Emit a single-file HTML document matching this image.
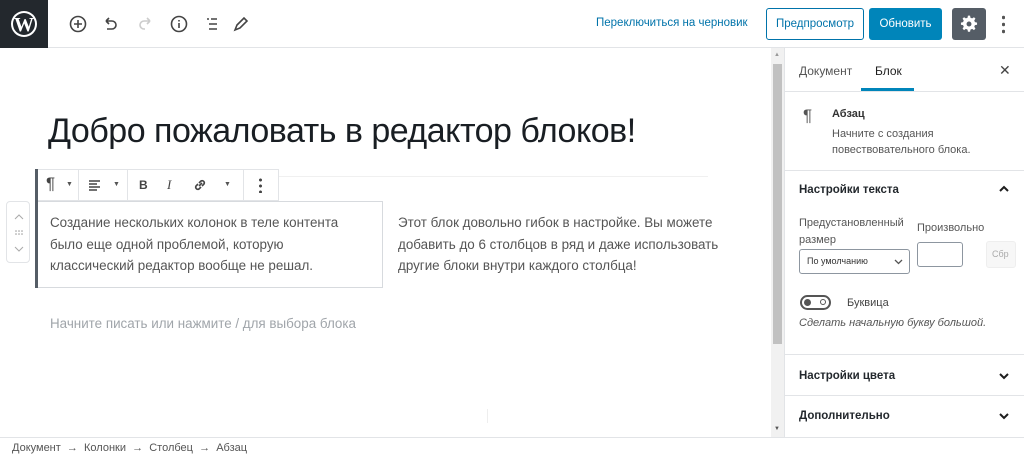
<!DOCTYPE html>
<html><head><meta charset="utf-8"><style>
*{box-sizing:border-box;margin:0;padding:0}
body{width:1024px;height:458px;overflow:hidden;background:#fff;font-family:"Liberation Sans","DejaVu Sans",sans-serif;color:#1e1e1e;position:relative}
.abs{position:absolute}
.top{left:0;top:0;width:1024px;height:48px;border-bottom:1px solid #e2e4e7}
.wp{left:0;top:0;width:48px;height:48px;background:#23282d}
.ic{stroke:#444;fill:none;stroke-width:1.6}
.side{left:784px;top:48px;width:240px;height:389px;border-left:1px solid #e2e4e7}
.sb{left:771px;top:48px;width:13px;height:389px;background:#f1f1f1}
.t13{font-size:12px}
.sec{border-top:1px solid #e2e4e7;width:240px;left:0}
.chev{stroke:#1e1e1e;stroke-width:2;fill:none}
</style></head><body>
<div class="abs top"></div>
<div class="abs wp"><svg width="48" height="48"><circle cx="24" cy="24" r="13" fill="#fff"/><circle cx="24" cy="24" r="11" fill="#23282d"/><text x="24" y="31" font-family="Liberation Serif" font-size="20" font-weight="bold" fill="#fff" text-anchor="middle">W</text></svg></div>
<svg class="abs" style="left:66px;top:12px" width="190" height="24">
<circle class="ic" cx="12" cy="12" r="7.5"/><path class="ic" d="M12 8v8M8 12h8"/>
<path class="ic" d="M40 9h6a4 4 0 0 1 0 8h-5M40 9l3-3M40 9l3 3"/>
<path stroke="#ccc" stroke-width="1.6" fill="none" d="M84 9h-6a4 4 0 0 0 0 8h1M84 9l-3-3M84 9l-3 3"/>
<circle class="ic" cx="113" cy="12" r="7.5"/><path class="ic" d="M113 11v5M113 8v1.5"/>
<path class="ic" d="M141 7h2M145 7h6M143 12h8M143 17h8"/>
<path class="ic" d="M169 18l2-5 7-7 3 3-7 7z"/>
</svg>
<div class="abs t13" style="left:596px;top:17px;color:#0073aa;font-size:11.5px">Переключиться на черновик</div>
<div class="abs t13" style="left:766px;top:8px;width:98px;height:32px;border:1px solid #0073aa;border-radius:3px;color:#0073aa;text-align:center;line-height:30px;font-size:11.5px">Предпросмотр</div>
<div class="abs t13" style="left:869px;top:8px;width:73px;height:32px;background:#0085ba;border-radius:3px;color:#fff;text-align:center;line-height:32px;font-size:11.5px">Обновить</div>
<div class="abs" style="left:952px;top:8px;width:34px;height:32px;background:#555d66;border-radius:3px"><svg width="34" height="32"><g transform="translate(17 16) scale(0.7) translate(-17 -16)"><path fill="#fff" d="M15.5 4h3l.6 3 2.4 1 2.6-1.7 2.1 2.1-1.7 2.6 1 2.4 3 .6v3l-3 .6-1 2.4 1.7 2.6-2.1 2.1-2.6-1.7-2.4 1-.6 3h-3l-.6-3-2.4-1-2.6 1.7-2.1-2.1 1.7-2.6-1-2.4-3-.6v-3l3-.6 1-2.4-1.7-2.6 2.1-2.1 2.6 1.7 2.4-1z"/><circle cx="17" cy="16" r="3.5" fill="#555d66"/></g></svg></div>
<div class="abs" style="left:1002px;top:14px;width:3px;height:20px;background:radial-gradient(circle,#555 1.5px,transparent 2px) 0 0/3px 7px"></div>

<div class="abs" style="left:48px;top:112px;font-size:34px;color:#191e23;letter-spacing:-0.5px">Добро пожаловать в редактор блоков!</div>
<div class="abs" style="left:36px;top:176px;width:672px;border-top:1px solid #f0f0f0"></div>
<div class="abs" style="left:35px;top:169px;width:244px;height:32px;border:1px solid #e2e4e7;background:#fff"></div>
<div class="abs" style="left:35px;top:169px;width:3px;height:119px;background:#555d66"></div>
<div class="abs" style="left:78px;top:170px;width:1px;height:30px;background:#e2e4e7"></div>
<div class="abs" style="left:127px;top:170px;width:1px;height:30px;background:#e2e4e7"></div>
<div class="abs" style="left:243px;top:170px;width:1px;height:30px;background:#e2e4e7"></div>
<div class="abs" style="left:46px;top:174px;font-size:17px;color:#444">¶</div>
<div class="abs" style="left:66px;top:181px;font-size:7px;color:#555">▼</div>
<svg class="abs" style="left:87px;top:177px" width="16" height="16"><path stroke="#444" stroke-width="1.4" d="M2 4h11M2 7h8M2 10h11M2 13h8"/></svg>
<div class="abs" style="left:113px;top:181px;font-size:7px;color:#555">▼</div>
<div class="abs" style="left:139px;top:178px;font-size:12px;font-weight:bold;color:#444">B</div>
<div class="abs" style="left:167px;top:177px;font-size:13px;font-style:italic;font-family:'Liberation Serif';color:#444">I</div>
<svg class="abs" style="left:192px;top:177px" width="16" height="16"><path class="ic" d="M7 9l3-3M6 7l-2 2a2.2 2.2 0 0 0 3 3l2-2M10 9l2-2a2.2 2.2 0 0 0-3-3L7 6"/></svg>
<div class="abs" style="left:224px;top:181px;font-size:7px;color:#555">▼</div>
<div class="abs" style="left:259px;top:177px;width:3px;height:16px;background:radial-gradient(circle,#444 1.3px,transparent 1.7px) 0 0/3px 6px"></div>
<div class="abs" style="left:38px;top:201px;width:345px;height:87px;border:1px solid #d7dade;border-left:none"></div>
<div class="abs" style="left:6px;top:201px;width:24px;height:62px;border:1px solid #e2e4e7;border-radius:4px"><svg width="24" height="62"><path stroke="#aaa" fill="none" d="M8 17l4-4 4 4M8 45l4 4 4-4"/><g fill="#999"><circle cx="9" cy="29" r=".8"/><circle cx="12" cy="29" r=".8"/><circle cx="15" cy="29" r=".8"/><circle cx="9" cy="32" r=".8"/><circle cx="12" cy="32" r=".8"/><circle cx="15" cy="32" r=".8"/></g></svg></div>
<div class="abs" style="left:50px;top:212px;font-size:13.4px;line-height:21.5px;color:#555">Создание нескольких колонок в теле контента<br>было еще одной проблемой, которую<br>классический редактор вообще не решал.</div>
<div class="abs" style="left:398px;top:212px;font-size:13.4px;line-height:21.5px;color:#555">Этот блок довольно гибок в настройке. Вы можете<br>добавить до 6 столбцов в ряд и даже использовать<br>другие блоки внутри каждого столбца!</div>
<div class="abs" style="left:50px;top:316px;font-size:13.4px;color:#a0a5aa">Начните писать или нажмите / для выбора блока</div>
<div class="abs" style="left:487px;top:409px;width:1px;height:14px;background:#eee"></div>

<div class="abs sb"><div class="abs" style="left:2px;top:16px;width:9px;height:280px;background:#c1c1c1"></div><div class="abs" style="left:3px;top:4px;font-size:6px;color:#999">▲</div><div class="abs" style="left:3px;top:378px;font-size:6px;color:#555">▼</div></div>
<div class="abs side">
<div class="abs t13" style="left:14px;top:16px;color:#555">Документ</div>
<div class="abs t13" style="left:90px;top:16px">Блок</div>
<div class="abs" style="left:76px;top:40px;width:53px;height:3px;background:#0085ba"></div>
<div class="abs" style="left:214px;top:14px;font-size:14px;color:#444">✕</div>
<div class="abs sec" style="top:43px"></div>
<div class="abs" style="left:18px;top:58px;font-size:17px;color:#555">¶</div>
<div class="abs" style="left:47px;top:60px;font-size:11px;font-weight:bold;color:#333">Абзац</div>
<div class="abs" style="left:47px;top:78px;font-size:11px;line-height:16px;color:#555">Начните с создания<br>повествовательного блока.</div>
<div class="abs sec" style="top:122px"></div>
<div class="abs" style="left:14px;top:136px;font-size:11.5px;font-weight:bold;color:#23282d">Настройки текста</div>
<svg class="abs chev" style="left:212px;top:136px" width="14" height="10"><path d="M3 7l4-4 4 4"/></svg>
<div class="abs" style="left:14px;top:167px;font-size:11px;line-height:17px;color:#555">Предустановленный<br>размер</div>
<div class="abs" style="left:132px;top:174px;font-size:11px;color:#555">Произвольно</div>
<div class="abs" style="left:14px;top:201px;width:111px;height:25px;border:1px solid #8d96a0;border-radius:3px;font-size:9px;color:#333;line-height:23px;padding-left:7px">По умолчанию<svg style="position:absolute;right:6px;top:8px" width="9" height="7"><path d="M1 2l3.5 3.5L8 2" stroke="#555" fill="none" stroke-width="1.3"/></svg></div>
<div class="abs" style="left:132px;top:194px;width:46px;height:25px;border:1px solid #8d96a0;border-radius:3px"></div>
<div class="abs" style="left:201px;top:193px;width:30px;height:27px;border:1px solid #eee;border-radius:3px;background:#f7f7f7;font-size:9px;color:#aaa;line-height:25px;padding-left:5px">Сбр</div>
<div class="abs" style="left:15px;top:247px;width:31px;height:15px;border:2px solid #555;border-radius:8px"><div class="abs" style="left:2px;top:2px;width:7px;height:7px;border-radius:50%;background:#555"></div><div class="abs" style="left:18px;top:2px;width:6px;height:6px;border-radius:50%;border:1.5px solid #555"></div></div>
<div class="abs" style="left:62px;top:249px;font-size:11px;color:#444">Буквица</div>
<div class="abs" style="left:14px;top:269px;font-size:11px;font-style:italic;color:#555">Сделать начальную букву большой.</div>
<div class="abs sec" style="top:306px"></div>
<div class="abs" style="left:14px;top:322px;font-size:11.5px;font-weight:bold;color:#23282d">Настройки цвета</div>
<svg class="abs chev" style="left:212px;top:323px" width="14" height="10"><path d="M3 3l4 4 4-4"/></svg>
<div class="abs sec" style="top:347px"></div>
<div class="abs" style="left:14px;top:362px;font-size:11.5px;font-weight:bold;color:#23282d">Дополнительно</div>
<svg class="abs chev" style="left:212px;top:363px" width="14" height="10"><path d="M3 3l4 4 4-4"/></svg>
</div>
<div class="abs" style="left:0;top:437px;width:1024px;height:21px;border-top:1px solid #e2e4e7;background:#fff"></div>
<div class="abs" style="left:12px;top:442px;font-size:11px;color:#555">Документ &nbsp;→&nbsp; Колонки &nbsp;→&nbsp; Столбец &nbsp;→&nbsp; Абзац</div>
</body></html>
